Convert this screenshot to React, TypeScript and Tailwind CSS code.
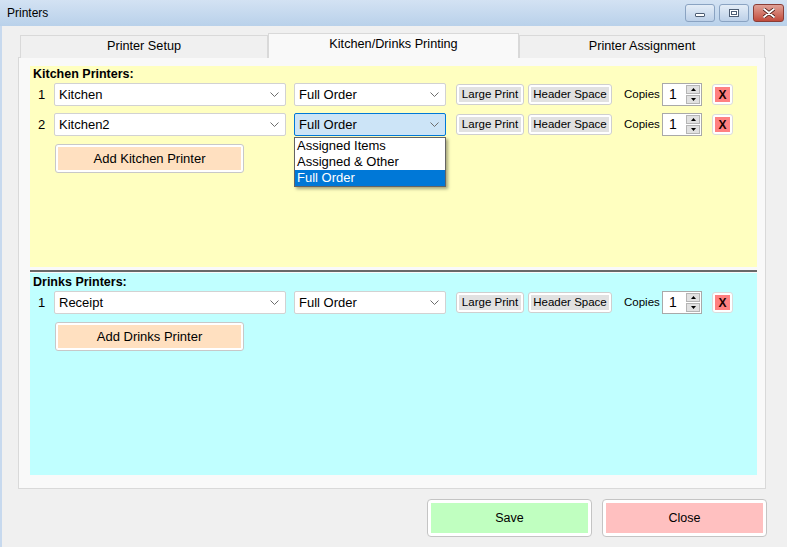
import React from "react";

const Chevron = () => (
  <svg width="9" height="5" viewBox="0 0 9 5" className="shrink-0">
    <polyline points="0.5,0.5 4.5,4.5 8.5,0.5" fill="none" stroke="#6d6d6d" strokeWidth="1" />
  </svg>
);

const Combo: React.FC<{ value: string; w: string; focused?: boolean }> = ({ value, w, focused }) => (
  <div
    className={`${w} h-[23px] flex items-center justify-between pl-[4px] pr-[6px] rounded-[2px] border text-[13px] text-black ${
      focused ? "bg-[#cce4f7] border-[#0078d7]" : "bg-white border-[#d2d2d2]"
    }`}
  >
    <span>{value}</span>
    <Chevron />
  </div>
);

const GrayButton: React.FC<{ label: string; w: string }> = ({ label, w }) => (
  <div className={`${w} h-[21px] rounded-[3px] border border-[#cfcfcf] bg-white p-[2px]`}>
    <div className="h-full bg-[#e1e1e1] flex items-center justify-center text-[11.5px] text-black">{label}</div>
  </div>
);

const Spinner = () => (
  <div className="w-[40px] h-[23px] border border-[#a9a9a9] bg-white flex">
    <div className="flex-1 flex items-center pl-[6px] text-[14px] text-black">1</div>
    <div className="w-[15px] flex flex-col gap-[1px] py-[1px] pr-[1px]">
      <div className="flex-1 bg-[#e1e1e1] border border-[#b5b5b5] flex items-center justify-center">
        <svg width="5" height="3" viewBox="0 0 5 3">
          <polygon points="2.5,0 5,3 0,3" fill="#000" />
        </svg>
      </div>
      <div className="flex-1 bg-[#e1e1e1] border border-[#b5b5b5] flex items-center justify-center">
        <svg width="5" height="3" viewBox="0 0 5 3">
          <polygon points="0,0 5,0 2.5,3" fill="#000" />
        </svg>
      </div>
    </div>
  </div>
);

const XButton = () => (
  <div className="w-[21px] h-[21px] rounded-[3px] border border-[#dcdcdc] bg-white p-[2px]">
    <div className="h-full bg-[#ff8080] flex items-center justify-center text-[12px] font-bold text-[#1a0000]">X</div>
  </div>
);

const PrinterRow: React.FC<{ n: number; name: string; focused?: boolean; children?: React.ReactNode }> = ({
  n,
  name,
  focused,
  children,
}) => (
  <div className="flex items-center h-[23px]">
    <div className="w-[24px] pl-[8px] text-[13px] text-black">{n}</div>
    <Combo value={name} w="w-[232px]" />
    <div className="relative ml-[8px]">
      <Combo value="Full Order" w="w-[152px]" focused={focused} />
      {children}
    </div>
    <div className="ml-[10px]">
      <GrayButton label="Large Print" w="w-[68px]" />
    </div>
    <div className="ml-[4px]">
      <GrayButton label="Header Space" w="w-[84px]" />
    </div>
    <span className="ml-[12px] w-[34px] text-[11.5px] text-black">Copies</span>
    <div className="ml-[4px]">
      <Spinner />
    </div>
    <div className="ml-[10px]">
      <XButton />
    </div>
  </div>
);

const AddButton: React.FC<{ label: string }> = ({ label }) => (
  <div className="ml-[25px] w-[189px] h-[29px] rounded-[3px] border border-[#c8c8c8] bg-white p-[2px]">
    <div className="h-full bg-[#ffe0c0] flex items-center justify-center text-[13px] text-black">{label}</div>
  </div>
);

const DropList = () => (
  <div className="absolute left-0 top-[24px] w-[152px] border border-[#646464] bg-white shadow-[2px_2px_3px_rgba(0,0,0,0.35)] z-10 text-[13px] text-black">
    <div className="h-[16px] leading-[16px] pl-[2px]">Assigned Items</div>
    <div className="h-[16px] leading-[16px] pl-[2px]">Assigned &amp; Other</div>
    <div className="h-[16px] leading-[16px] pl-[2px] bg-[#0078d7] text-white">Full Order</div>
  </div>
);

const BigButton: React.FC<{ label: string; color: string }> = ({ label, color }) => (
  <div className="w-[165px] h-[38px] rounded-[4px] border border-[#c4c4c4] bg-white p-[3px]">
    <div className={`h-full ${color} flex items-center justify-center text-[12.5px] text-black`}>{label}</div>
  </div>
);

export default function App() {
  return (
    <div className="w-[787px] h-[547px] flex flex-col bg-[#f0f0f0] font-['Liberation_Sans',Arial,sans-serif] overflow-hidden">
      {/* title bar */}
      <div className="h-[26px] shrink-0 flex items-center justify-between bg-gradient-to-b from-[#d3e2f3] to-[#b9d1ea] pl-[7px] pr-[3px]">
        <span className="text-[12px] text-black">Printers</span>
        <div className="flex items-center gap-[4px] h-[18px]">
          <div className="w-[30px] h-[18px] rounded-[3px] border border-[#8aa3c2] bg-gradient-to-b from-[#e4edf7] to-[#bcd0e8] flex items-center justify-center">
            <div className="w-[10px] h-[4px] bg-white border border-[#4d5d73] rounded-[1px] mt-[4px]" />
          </div>
          <div className="w-[30px] h-[18px] rounded-[3px] border border-[#8aa3c2] bg-gradient-to-b from-[#e4edf7] to-[#bcd0e8] flex items-center justify-center">
            <div className="w-[10px] h-[8px] border border-[#4d5d73] bg-white p-[1px]">
              <div className="w-full h-full border border-[#4d5d73]" />
            </div>
          </div>
          <div className="w-[31px] h-[18px] rounded-[3px] border border-[#8a3d36] bg-gradient-to-b from-[#e0a197] to-[#c14a3c] flex items-center justify-center">
            <svg width="12" height="10" viewBox="0 0 12 10">
              <path d="M1 1 L11 9 M11 1 L1 9" stroke="#4a1b16" strokeWidth="3.4" strokeLinecap="round" />
              <path d="M1 1 L11 9 M11 1 L1 9" stroke="#ffffff" strokeWidth="1.8" strokeLinecap="round" />
            </svg>
          </div>
        </div>
      </div>

      {/* body */}
      <div className="flex-1 flex flex-col border-l-2 border-[#c7d9ee] pl-[16px] pr-[21px] pt-[7px]">
        {/* tabs */}
        <div className="flex items-end pl-[2px] h-[25px] -mb-px relative z-[1] text-[12.7px] text-black">
          <div className="w-[248px] h-[23px] border border-[#d9d9d9] border-b-0 bg-[#f0f0f0] flex items-center justify-center">
            Printer Setup
          </div>
          <div className="w-[251px] h-[25px] border border-[#d9d9d9] border-b-0 bg-[#f9f9f9] flex items-center justify-center pb-[2px]">
            Kitchen/Drinks Printing
          </div>
          <div className="w-[246px] h-[23px] border border-[#d9d9d9] border-b-0 bg-[#f0f0f0] flex items-center justify-center">
            Printer Assignment
          </div>
        </div>

        {/* tab panel */}
        <div className="border border-[#d9d9d9] bg-[#f9f9f9] pl-[11px] pr-[8px] pt-[8px] pb-[13px]">
          {/* kitchen */}
          <div className="h-[201px] bg-[#ffffc0] flex flex-col">
            <div className="h-[17px] pl-[3px] pt-[1px] text-[12.5px] font-bold text-black leading-[15px]">Kitchen Printers:</div>
            <div className="flex flex-col gap-[7px]">
              <PrinterRow n={1} name="Kitchen" />
              <PrinterRow n={2} name="Kitchen2" focused>
                <DropList />
              </PrinterRow>
            </div>
            <div className="mt-[8px]">
              <AddButton label="Add Kitchen Printer" />
            </div>
          </div>
          <div className="mt-[3px] h-[2px] bg-[#696969]" />
          {/* drinks */}
          <div className="mt-[1px] h-[202px] bg-[#c0ffff] flex flex-col">
            <div className="h-[18px] pl-[3px] pt-[2px] text-[12.5px] font-bold text-black leading-[15px]">Drinks Printers:</div>
            <PrinterRow n={1} name="Receipt" />
            <div className="mt-[8px]">
              <AddButton label="Add Drinks Printer" />
            </div>
          </div>
        </div>

        {/* footer */}
        <div className="flex justify-end gap-[10px] mt-[10px] -mr-px">
          <BigButton label="Save" color="bg-[#c0ffc0]" />
          <BigButton label="Close" color="bg-[#ffc0c0]" />
        </div>
      </div>
    </div>
  );
}
